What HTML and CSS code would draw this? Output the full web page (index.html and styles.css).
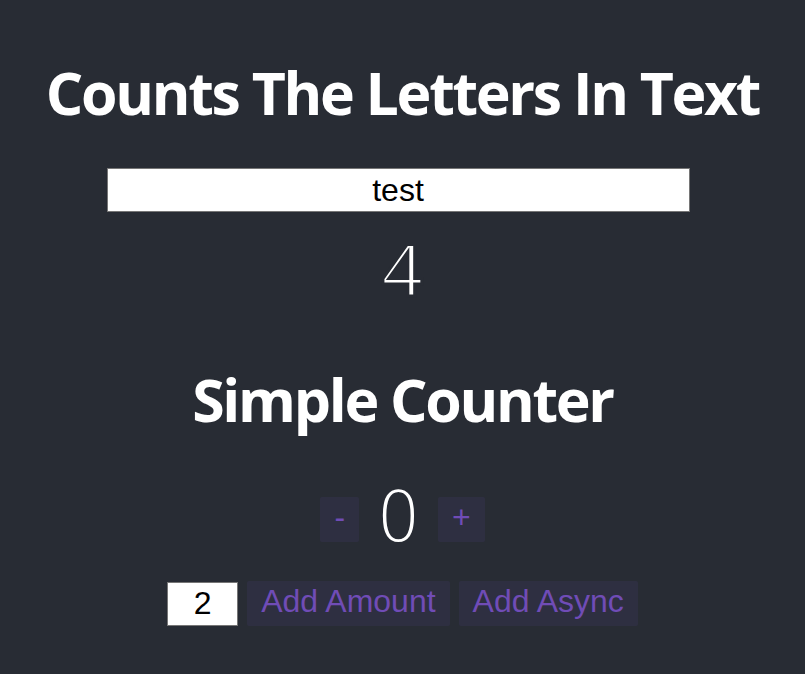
FILE: index.html
```html
<!DOCTYPE html>
<html lang="en">
<head>
<meta charset="utf-8">
<title>Counter</title>
<link rel="stylesheet" href="styles.css">
</head>
<body>
<div class="app">
  <h1 class="title">Counts The Letters In Text</h1>
  <input class="text-input" type="text" value="test">
  <div class="letter-count">4</div>
  <h2 class="title title-counter">Simple Counter</h2>
  <div class="row row-top">
    <button class="button" aria-label="Decrement value">-</button>
    <span class="value">0</span>
    <button class="button" aria-label="Increment value">+</button>
  </div>
  <div class="row">
    <input class="textbox" type="text" value="2">
    <button class="button">Add Amount</button>
    <button class="button">Add Async</button>
  </div>
</div>
</body>
</html>
```

FILE: styles.css
```css
html, body {
  margin: 0;
  padding: 0;
  background: #282c34;
}

body {
  color: #ffffff;
  font-family: "Liberation Sans", Arial, sans-serif;
}

.app {
  display: flex;
  flex-direction: column;
  align-items: center;
  text-align: center;
}

.title {
  font-family: "Open Sans", "Noto Sans", sans-serif;
  font-weight: 700;
  font-size: 59px;
  line-height: 60px;
  letter-spacing: -2.3px;
  margin: 62px 0 0;
  color: #ffffff;
}

.text-input {
  box-sizing: border-box;
  margin: 46px 9px 0 0;
  width: 583px;
  height: 44px;
  border: 1px solid #767676;
  background: #ffffff;
  color: #000000;
  font-family: "Liberation Sans", Arial, sans-serif;
  font-size: 32px;
  text-align: center;
  padding: 0 2px;
  outline: none;
}

.letter-count {
  margin-top: 24px;
  font-family: "Liberation Mono", "Courier New", monospace;
  font-size: 78px;
  line-height: 78px;
  color: #ffffff;
  -webkit-text-stroke: 3px #282c34;
}

.title-counter {
  margin-top: 55px;
}

.row {
  display: flex;
  align-items: center;
  justify-content: center;
  gap: 9px;
}

.row-top {
  gap: 0;
  margin-top: 45px;
  margin-bottom: 17px;
}

.value {
  font-family: "DejaVu Sans", sans-serif;
  font-weight: 200;
  font-size: 68.6px;
  line-height: 86px;
  margin: 0 0 4px;
  padding: 0 17.6px;
  color: #ffffff;
}

.button {
  appearance: none;
  font-family: "Liberation Sans", Arial, sans-serif;
  font-size: 32px;
  line-height: normal;
  padding: 0 12px 4px;
  border: 2px solid transparent;
  border-radius: 2px;
  color: rgb(112, 76, 182);
  background-color: rgba(112, 76, 182, 0.1);
  cursor: pointer;
  outline: none;
  margin: 0;
}

.textbox {
  box-sizing: border-box;
  width: 71px;
  height: 44px;
  font-family: "Liberation Sans", Arial, sans-serif;
  font-size: 32px;
  padding: 2px;
  text-align: center;
  border: 1px solid #767676;
  background: #ffffff;
  color: #000000;
  outline: none;
  margin: 0;
}
```
